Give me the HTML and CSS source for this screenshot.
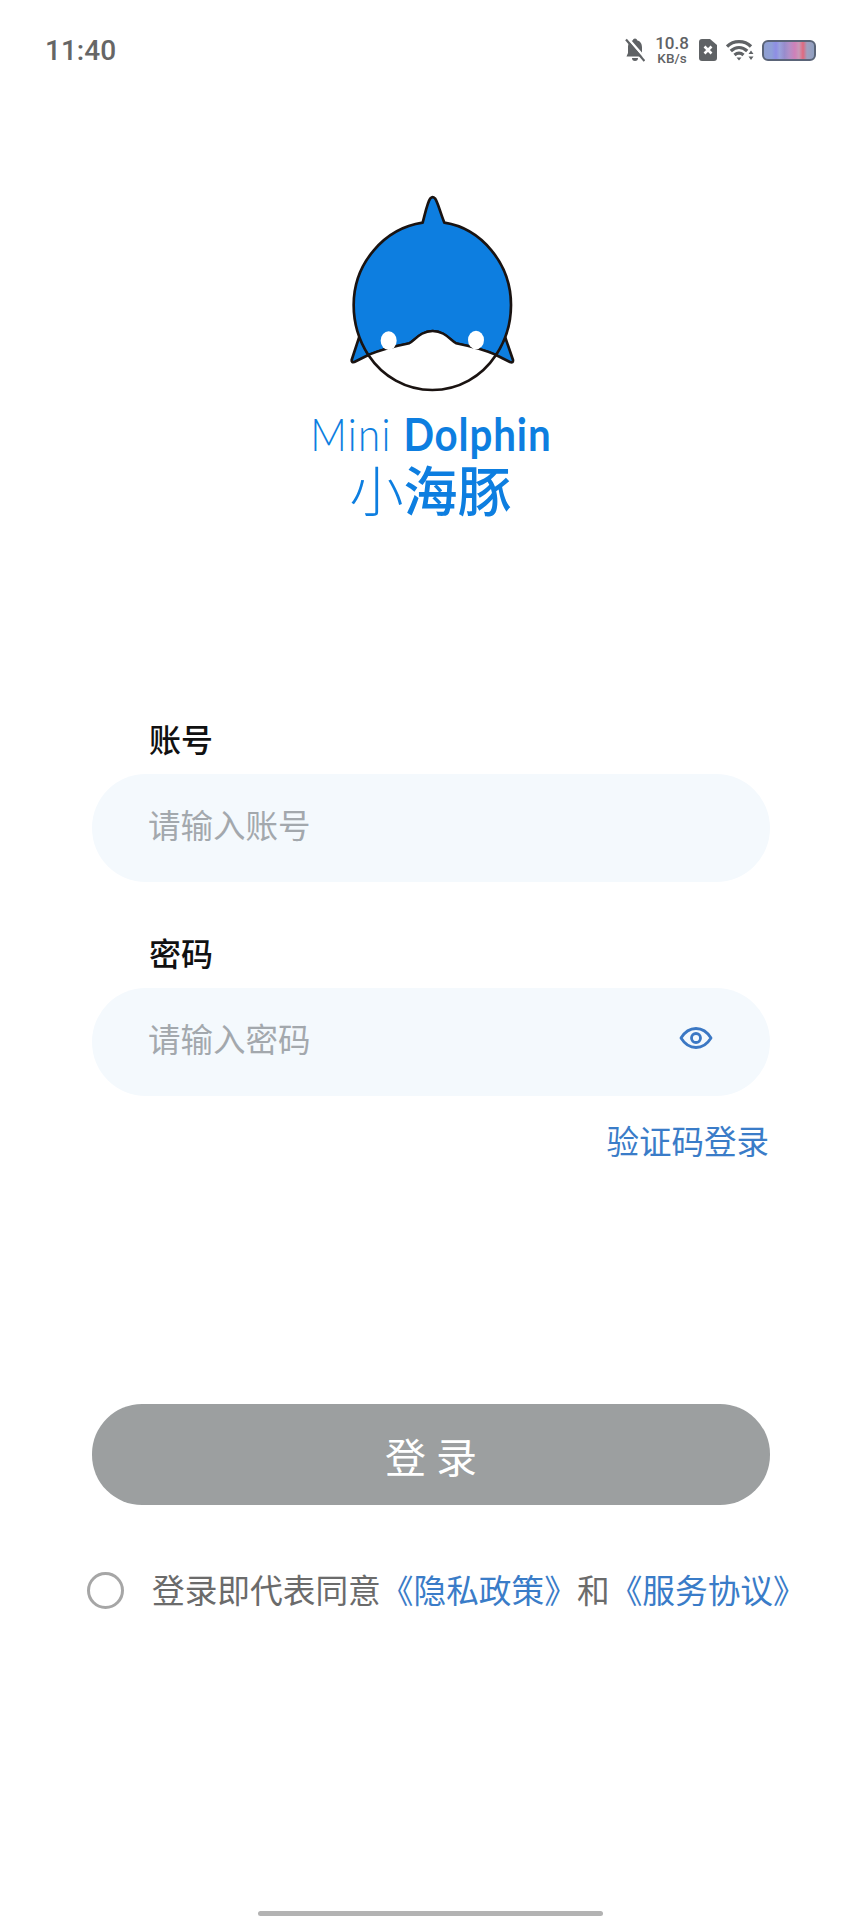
FILE: index.html
```html
<!DOCTYPE html>
<html lang="zh-CN">
<head>
  <meta charset="UTF-8">
  <title>小海豚 登录</title>
  <link rel="stylesheet" href="styles.css">
</head>
<body>
  <div class="page">

    <!-- Status bar -->
    <div class="status-bar">
      <span class="time">11:40</span>
      <div class="status-icons">
        <svg class="icon-bell" width="20" height="24" viewBox="0 0 20 24">
          <path d="M10 .5c1.200 0 2 .8 2 1.800C15.500 3.200 17 6 17 9.500V15l1.500 3.500h-17L3 15V9.500C3 6 4.500 3.200 8 2.300 8 1.300 8.800.5 10 .5z" fill="#5f6265"/>
          <path d="M7 20h6a3 3 0 0 1-6 0z" fill="#5f6265"/>
          <path d="M3 .5L21 21" stroke="#fff" stroke-width="2.500"/>
          <path d="M1 1.500L19.500 23" stroke="#5f6265" stroke-width="2.200"/>
        </svg>
        <div class="speed">
          <span class="speed-num">10.8</span>
          <span class="speed-unit">KB/s</span>
        </div>
        <svg class="icon-sim" width="18" height="22" viewBox="0 0 18 22">
          <path d="M3 0h8l7 6v13a3 3 0 0 1-3 3H3a3 3 0 0 1-3-3V3a3 3 0 0 1 3-3z" fill="#5f6265"/>
          <path d="M5.500 7.500l7 7M12.500 7.500l-7 7" stroke="#fff" stroke-width="2.600"/>
        </svg>
        <svg class="icon-wifi" width="28" height="22" viewBox="0 0 28 22">
          <path d="M1 7.500C7.500 1 18.500 1 25 7.500M4.800 12c5-4.600 11.400-4.600 16.400 0M8.500 16c3-2.500 6-2.500 9 0" fill="none" stroke="#5f6265" stroke-width="3.300"/>
          <path d="M10.500 18.500h5L13 21.500z" fill="#5f6265"/>
          <path d="M25 11.500l2.500 3.500h-5zM25 21l2.500-3.500h-5z" fill="#5f6265"/>
        </svg>
        <div class="battery"></div>
      </div>
    </div>

    <!-- Logo -->
    <div class="logo">
      <svg class="logo-mark" width="280" height="220" viewBox="0 0 840 660">
        <path d="M205 470L182 540Q181 548 190 546L232 525z" fill="#0d7ee0" stroke="#1a1311" stroke-width="8" stroke-linejoin="round"/>
        <path d="M642 470L666 540Q667 550 657 546L615 525z" fill="#0d7ee0" stroke="#1a1311" stroke-width="8" stroke-linejoin="round"/>
        <path d="M232 525C280 505 320 497 355 490C372 480 390 453 425 453C460 453 478 480 495 490C530 497 570 505 615 525C645 480 660 430 660 375C660 250 570 145 460 128C445 90 440 65 432 55Q425 48 418 55C410 65 405 90 395 128C280 145 188 250 188 375C188 430 203 480 232 525z" fill="#0d7ee0" stroke="#1a1311" stroke-width="8" stroke-linejoin="round"/>
        <path d="M232 525C275 590 345 630 424 630C503 630 572 590 615 525C570 505 530 497 495 490C478 480 460 453 425 453C390 453 372 480 355 490C320 497 280 505 232 525z" fill="#fff"/>
        <path d="M232 525C275 590 345 630 424 630C503 630 572 590 615 525" fill="none" stroke="#1a1311" stroke-width="8"/>
        <path d="M232 525C280 505 320 497 355 490C372 480 390 453 425 453C460 453 478 480 495 490C530 497 570 505 615 525" fill="none" stroke="#1a1311" stroke-width="7"/>
        <ellipse cx="293" cy="482" rx="24" ry="28" fill="#fff"/>
        <ellipse cx="555" cy="480" rx="24" ry="28" fill="#fff"/>
      </svg>
      <div class="logo-en"><span class="logo-en-thin">Mini</span> <span class="logo-en-bold">Dolphin</span></div>
      <div class="logo-cn"><span class="logo-cn-thin">小</span>海豚</div>
    </div>

    <!-- Form -->
    <div class="form">
      <div class="field-label">账号</div>
      <div class="field">
        <span class="placeholder">请输入账号</span>
      </div>

      <div class="field-label field-label-second">密码</div>
      <div class="field">
        <span class="placeholder">请输入密码</span>
        <svg class="eye" width="34" height="24" viewBox="0 0 34 24">
          <path d="M2 12C6 5.500 11 2.500 17 2.500S28 5.500 32 12C28 18.500 23 21.500 17 21.500S6 18.500 2 12z" fill="none" stroke="#3b78c4" stroke-width="2.800" stroke-linejoin="round"/>
          <circle cx="17" cy="12" r="4.500" fill="none" stroke="#3b78c4" stroke-width="2.800"/>
        </svg>
      </div>

      <div class="alt-login">验证码登录</div>

      <button class="login-btn">登录</button>

      <div class="agreement">
        <span class="radio"></span>
        <span class="agreement-text">登录即代表同意<a class="link">《隐私政策》</a>和<a class="link">《服务协议》</a></span>
      </div>
    </div>

    <div class="home-bar"></div>
  </div>
</body>
</html>
```
FILE: styles.css
```css
/* Global */
* {
  box-sizing: border-box;
}
body {
  margin: 0;
  background: #fff;
  font-family: "Noto Sans CJK SC", "Noto Sans", sans-serif;
}
.page {
  display: flex;
  flex-direction: column;
  height: 1920px;
  overflow: hidden;
}

/* Status bar */
.status-bar {
  display: flex;
  justify-content: space-between;
  align-items: center;
  height: 50px;
  margin-top: 25px;
  padding: 0 45px;
}
.time {
  font-family: Roboto, sans-serif;
  font-size: 28px;
  font-weight: 500;
  color: #666;
}
.status-icons {
  display: flex;
  align-items: center;
}
.icon-bell {
  margin-right: 9px;
}
.speed {
  display: flex;
  flex-direction: column;
  align-items: center;
  width: 36px;
  margin-right: 9px;
  font-family: Roboto, sans-serif;
  font-weight: 500;
  color: #5f6265;
}
.speed-num {
  font-size: 17px;
  line-height: 16px;
}
.speed-unit {
  font-size: 13.500px;
  line-height: 14px;
}
.icon-sim {
  margin-right: 9px;
}
.icon-wifi {
  margin-right: 8px;
}
.battery {
  width: 54px;
  height: 21px;
  border: 2.500px solid #5a6478;
  border-radius: 6px;
  background: linear-gradient(90deg, #8f9fd0 0%, #8f9fd8 15%, #8e8de4 24%, #9aa2dc 31%, #988ccc 41%, #b090c8 50%, #d080b8 62%, #c89ab8 70%, #e0687e 78%, #a0a0c0 86%, #8f9fc0 100%);
}

/* Logo */
.logo {
  display: flex;
  flex-direction: column;
  align-items: center;
  margin-top: 105px;
  color: #0d7ee0;
}
.logo-mark {
  display: block;
}
.logo-en {
  margin-top: 10px;
  font-family: Lato, sans-serif;
  font-size: 46px;
  line-height: 48px;
  letter-spacing: 1.500px;
  white-space: nowrap;
  transform: scaleX(0.875);
}
.logo-en-thin {
  font-weight: 300;
}
.logo-en-bold {
  font-weight: 700;
  letter-spacing: 1px;
}
.logo-cn {
  margin-top: 2px;
  font-size: 54px;
  line-height: 58px;
  font-weight: 500;
}
.logo-cn-thin {
  font-weight: 300;
}

/* Form */
.form {
  display: flex;
  flex-direction: column;
  margin-top: 202px;
  padding: 0 91px 0 92px;
}
.field-label {
  height: 40px;
  margin-bottom: 14px;
  padding-left: 57px;
  font-size: 32px;
  line-height: 36px;
  font-weight: 500;
  color: #111;
}
.field-label-second {
  margin-top: 52px;
}
.field {
  display: flex;
  justify-content: space-between;
  align-items: center;
  height: 108px;
  padding: 0 57px;
  border-radius: 54px;
  background: #f4f9fd;
}
.placeholder {
  margin-bottom: 10px;
  margin-left: -1px;
  font-size: 32.500px;
  color: #a3a8ad;
}
.eye {
  margin-top: -9px;
}
.alt-login {
  height: 40px;
  margin-top: 27px;
  padding-right: 1px;
  text-align: right;
  font-size: 32.500px;
  line-height: 34px;
  color: #3a7cc8;
}

/* Login button */
.login-btn {
  height: 101px;
  margin-top: 241px;
  padding: 0 0 0 10px;
  border: none;
  border-radius: 50px;
  background: #9c9fa0;
  color: #fff;
  font-family: inherit;
  font-size: 41px;
  letter-spacing: 10px;
}

/* Agreement */
.agreement {
  display: flex;
  align-items: center;
  margin-top: 64px;
  margin-left: -5px;
  white-space: nowrap;
}
.radio {
  flex: none;
  width: 37px;
  height: 37px;
  margin-right: 28px;
  border: 3px solid #a6a6a6;
  border-radius: 50%;
}
.agreement-text {
  margin-bottom: 3px;
  font-size: 32.700px;
  line-height: 40px;
  color: #6b6b6b;
}
.link {
  color: #3a7cc8;
}

/* Home indicator */
.home-bar {
  width: 345px;
  height: 5px;
  margin: auto auto 4px;
  border-radius: 3px;
  background: #b3b3b3;
}
```
